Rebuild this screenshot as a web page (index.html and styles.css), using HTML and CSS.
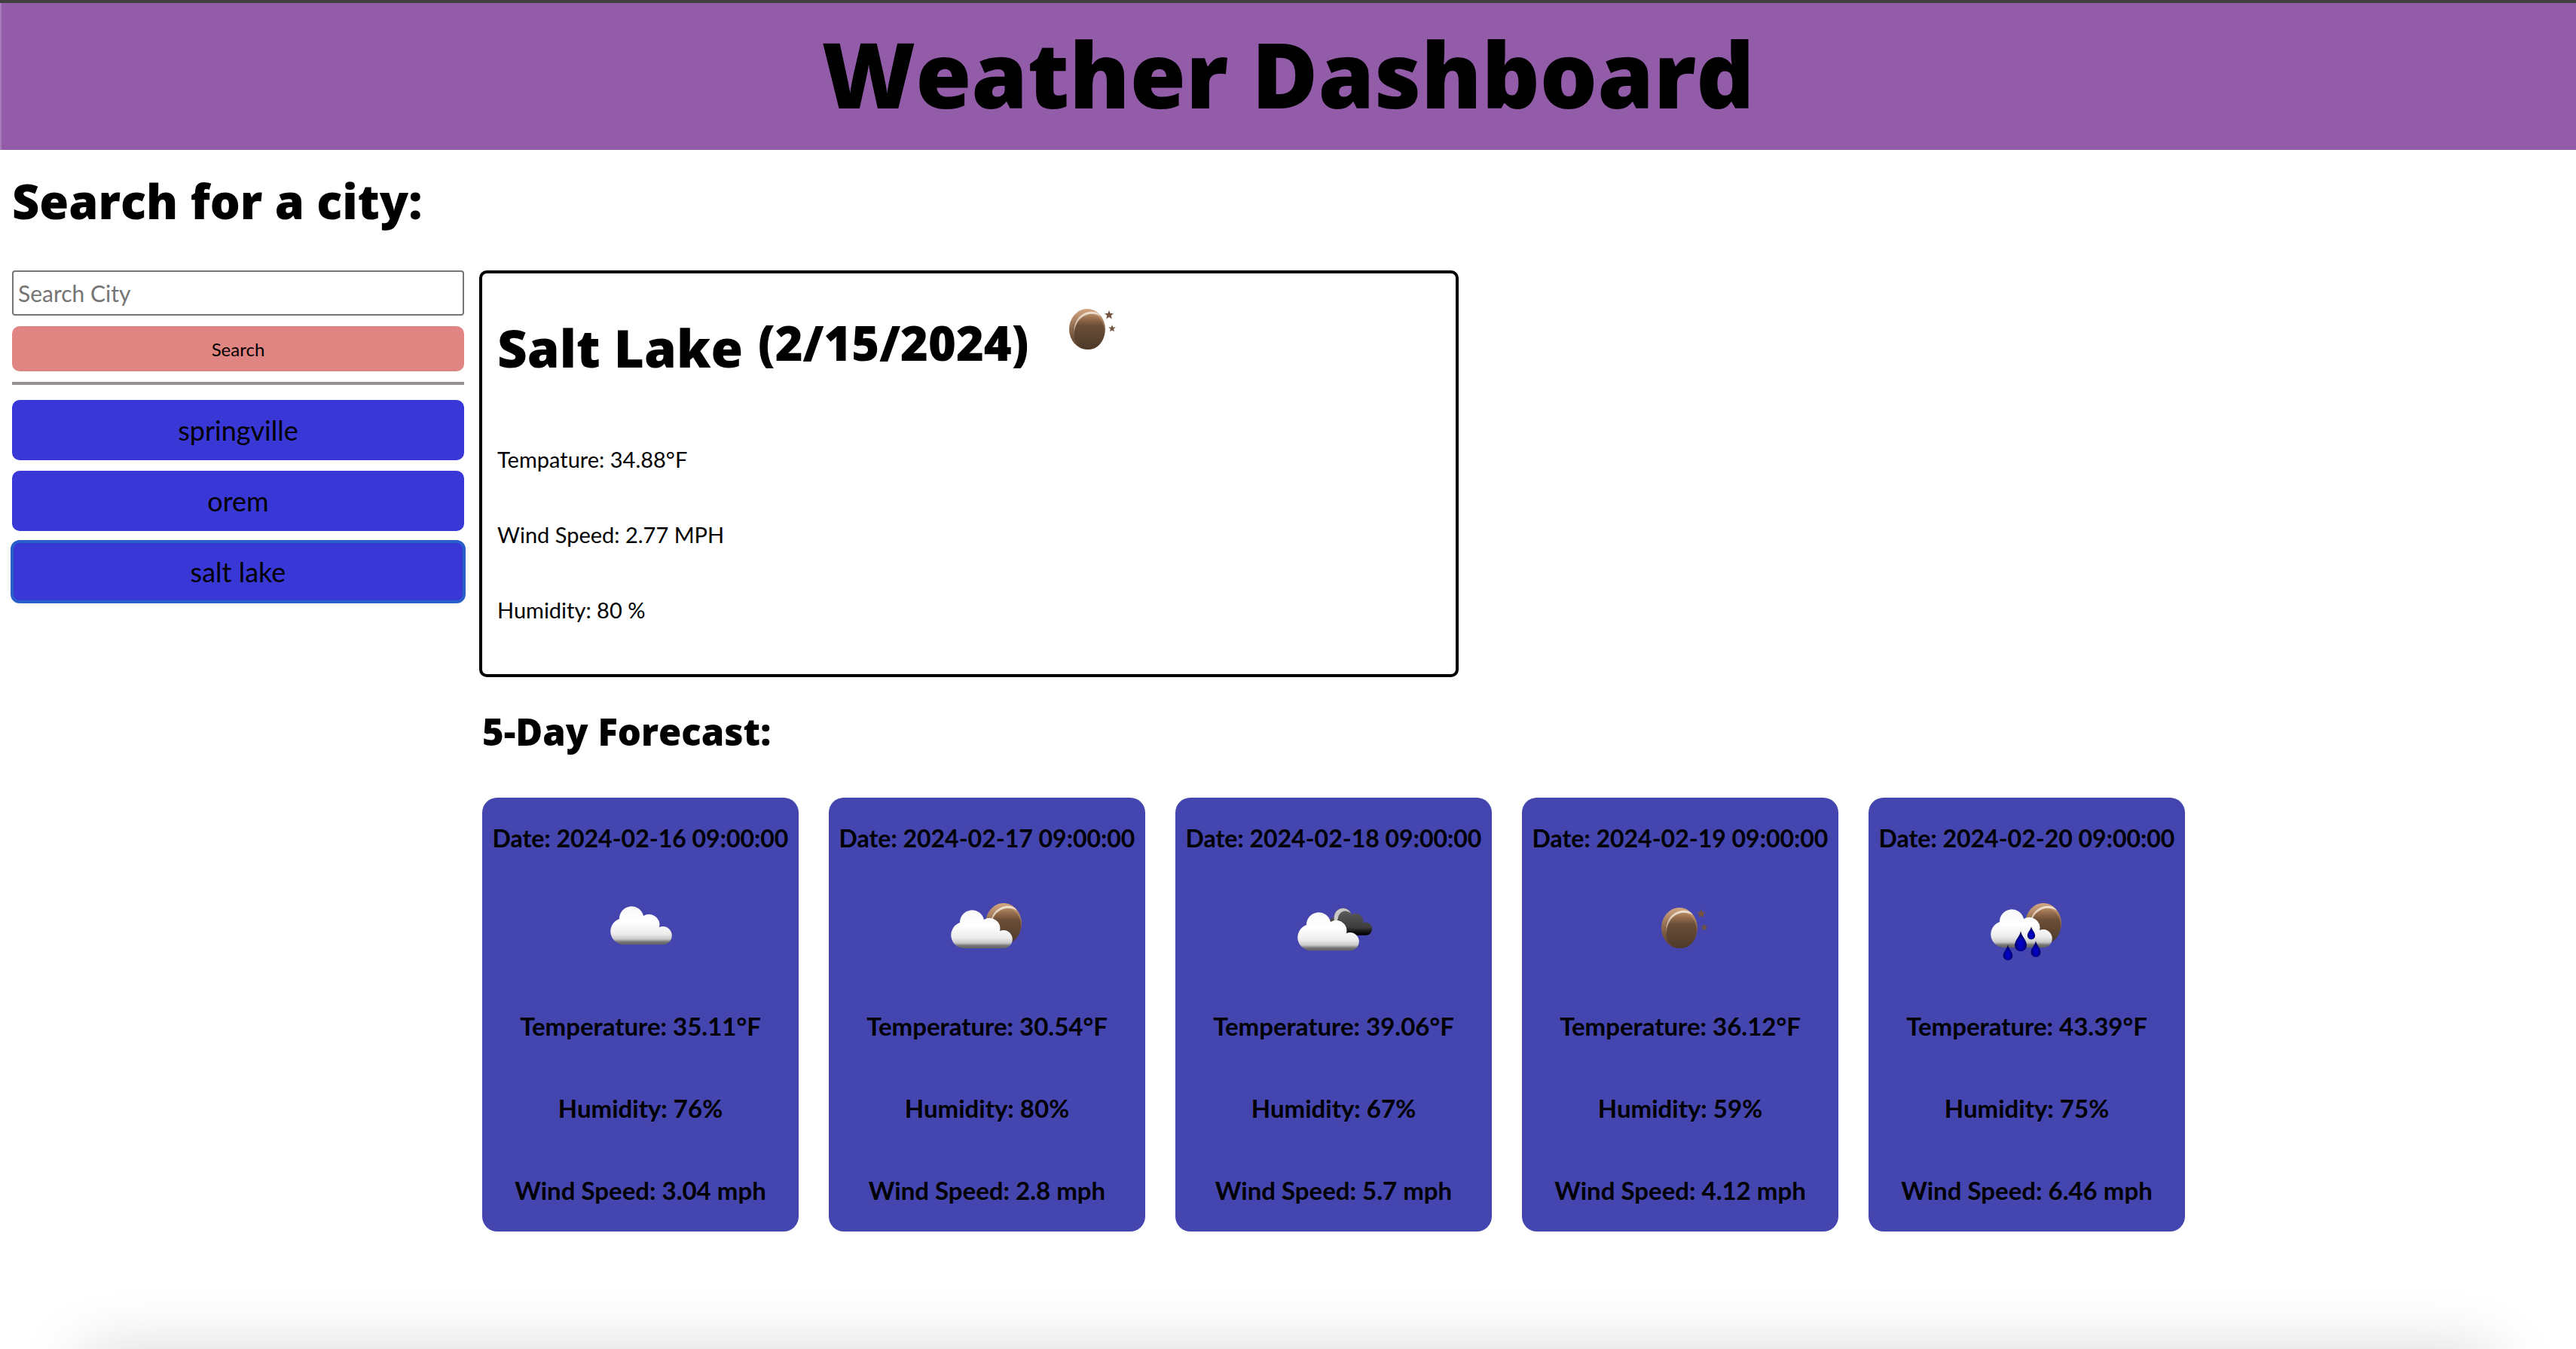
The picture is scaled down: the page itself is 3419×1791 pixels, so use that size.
FILE: index.html
```
<!DOCTYPE html>
<html lang="en">
<head>
  <meta charset="utf-8">
  <meta name="viewport" content="width=device-width, initial-scale=1">
  <title>Weather Dashboard</title>
  <link rel="stylesheet" href="styles.css">
</head>
<body>
  <svg class="sprite" aria-hidden="true">
    <defs>
      <linearGradient id="cloud-fill" x1="0" y1="0" x2="0" y2="1">
        <stop offset="0" stop-color="#f8f8f8"/>
        <stop offset="0.4" stop-color="#ffffff"/>
        <stop offset="0.72" stop-color="#ececec"/>
        <stop offset="0.86" stop-color="#c8c8c8"/>
        <stop offset="0.93" stop-color="#777777"/>
        <stop offset="1" stop-color="#606060"/>
      </linearGradient>
      <linearGradient id="dark-fill" x1="0" y1="0" x2="0" y2="1">
        <stop offset="0" stop-color="#6a6a6a"/>
        <stop offset="0.3" stop-color="#505050"/>
        <stop offset="0.7" stop-color="#3e3e3e"/>
        <stop offset="0.9" stop-color="#0c0c0c"/>
        <stop offset="1" stop-color="#000000"/>
      </linearGradient>
      <linearGradient id="moon-rim" x1="0" y1="0" x2="0" y2="1">
        <stop offset="0" stop-color="#d3a680"/>
        <stop offset="0.5" stop-color="#8c664a"/>
        <stop offset="1" stop-color="#503c2a"/>
      </linearGradient>
      <linearGradient id="moon-face" x1="0" y1="0" x2="0" y2="1">
        <stop offset="0" stop-color="#b98e6a"/>
        <stop offset="0.16" stop-color="#936a4b"/>
        <stop offset="0.34" stop-color="#6b4e37"/>
        <stop offset="1" stop-color="#4c392a"/>
      </linearGradient>
      <linearGradient id="moon-shine" x1="0" y1="0" x2="0" y2="1">
        <stop offset="0" stop-color="#f0e2d4"/>
        <stop offset="0.5" stop-color="#e0c8b0" stop-opacity="0.8"/>
        <stop offset="1" stop-color="#a98263" stop-opacity="0"/>
      </linearGradient>
      <radialGradient id="drop-fill" cx="0.5" cy="0.65" r="0.5">
        <stop offset="0" stop-color="#0000d8"/>
        <stop offset="0.55" stop-color="#0000a8"/>
        <stop offset="1" stop-color="#000058"/>
      </radialGradient>
      <path id="cloud" d="M27 72A17.5 17.5 0 0 1 22 38A16.2 16.2 0 0 1 54 34A14 14 0 0 1 75 49A12 12 0 1 1 80 72Z"/>
      <path id="drop" d="M0 0C1 7 8 12 8 19A8 8 0 0 1 -8 19C-8 12 -1 7 0 0Z" fill="url(#drop-fill)"/>
      <path id="star" d="M0 -6L1.6 -2L6 -1.8L2.6 1L3.8 5.4L0 3L-3.8 5.4L-2.6 1L-6 -1.8L-1.6 -2Z" fill="#74533f"/>
      <g id="moon">
        <ellipse cx="0" cy="0" rx="24" ry="27" fill="url(#moon-rim)"/>
        <ellipse cx="2" cy="3" rx="21" ry="24" fill="url(#moon-face)"/>
        <path d="M-17 16C-22 -4 -13 -21 3 -23C12 -24 16 -20 18 -17C12 -21 4 -21 -1 -19C-14 -14 -19 0 -17 16Z" fill="url(#moon-shine)"/>
      </g>
    </defs>
    <symbol id="icon-clear-night" viewBox="0 0 100 100">
      <use href="#moon" x="49" y="50"/>
      <use href="#star" x="78" y="31"/>
      <use href="#star" transform="translate(82 49) scale(.8)"/>
    </symbol>
    <symbol id="icon-clouds" viewBox="0 0 100 100">
      <use href="#cloud" fill="url(#cloud-fill)"/>
    </symbol>
    <symbol id="icon-moon-cloud" viewBox="0 0 100 100">
      <use href="#moon" x="72" y="44"/>
      <use href="#cloud" x="-8" y="5" fill="url(#cloud-fill)"/>
    </symbol>
    <symbol id="icon-overcast" viewBox="0 0 104 100">
      <g transform="translate(35 8) scale(.72)">
        <use href="#cloud" fill="url(#dark-fill)"/>
        <path d="M22 44C20 28 32 20 42 23C48 24 51 28 53 32C46 24 34 26 30 36L26 52Z" fill="#c8c8c8"/>
      </g>
      <use href="#cloud" x="-8" y="8" fill="url(#cloud-fill)"/>
    </symbol>
    <symbol id="icon-rain-night" viewBox="0 0 100 100">
      <use href="#moon" x="72" y="44"/>
      <use href="#cloud" x="-8" y="4" fill="url(#cloud-fill)"/>
      <use href="#drop" x="42" y="54"/>
      <use href="#drop" transform="translate(56 48) scale(.64)"/>
      <use href="#drop" transform="translate(25 72) scale(.78)"/>
      <use href="#drop" transform="translate(62 67) scale(.8)"/>
    </symbol>
  </svg>

  <header class="banner">
    <h1 class="banner-title">Weather Dashboard</h1>
  </header>

  <main class="page">
    <h2 class="search-title"><label for="city">Search for a city:</label></h2>
    <div class="columns">
      <aside class="sidebar">
        <form class="search-form" onsubmit="return false">
          <input class="search-input" id="city" type="text" placeholder="Search City">
          <button class="search-button" type="submit">Search</button>
        </form>
        <div class="history">
          <button class="history-button" type="button">springville</button>
          <button class="history-button" type="button">orem</button>
          <button class="history-button history-button-active" type="button">salt lake</button>
        </div>
      </aside>

      <div class="results">
        <section class="current">
          <div class="current-heading">
            <h2 class="current-city">Salt Lake</h2>
            <h3 class="current-date">(2/15/2024)</h3>
            <svg class="current-icon" role="img" aria-label="Clear night"><use href="#icon-clear-night"/></svg>
          </div>
          <div class="current-stats">
            <p class="current-stat">Tempature: 34.88°F</p>
            <p class="current-stat">Wind Speed: 2.77 MPH</p>
            <p class="current-stat">Humidity: 80 %</p>
          </div>
        </section>

        <section class="forecast">
          <h3 class="forecast-title">5-Day Forecast:</h3>
          <div class="cards">
            <article class="card">
              <h4 class="card-date">Date: 2024-02-16 09:00:00</h4>
              <svg class="card-icon" role="img" aria-label="Cloudy"><use href="#icon-clouds"/></svg>
              <div class="card-stats">
                <p class="card-stat">Temperature: 35.11°F</p>
                <p class="card-stat">Humidity: 76%</p>
                <p class="card-stat">Wind Speed: 3.04 mph</p>
              </div>
            </article>
            <article class="card">
              <h4 class="card-date">Date: 2024-02-17 09:00:00</h4>
              <svg class="card-icon" role="img" aria-label="Few clouds"><use href="#icon-moon-cloud"/></svg>
              <div class="card-stats">
                <p class="card-stat">Temperature: 30.54°F</p>
                <p class="card-stat">Humidity: 80%</p>
                <p class="card-stat">Wind Speed: 2.8 mph</p>
              </div>
            </article>
            <article class="card">
              <h4 class="card-date">Date: 2024-02-18 09:00:00</h4>
              <svg class="card-icon card-icon-wide" role="img" aria-label="Overcast"><use href="#icon-overcast"/></svg>
              <div class="card-stats">
                <p class="card-stat">Temperature: 39.06°F</p>
                <p class="card-stat">Humidity: 67%</p>
                <p class="card-stat">Wind Speed: 5.7 mph</p>
              </div>
            </article>
            <article class="card">
              <h4 class="card-date">Date: 2024-02-19 09:00:00</h4>
              <svg class="card-icon" role="img" aria-label="Clear night"><use href="#icon-clear-night"/></svg>
              <div class="card-stats">
                <p class="card-stat">Temperature: 36.12°F</p>
                <p class="card-stat">Humidity: 59%</p>
                <p class="card-stat">Wind Speed: 4.12 mph</p>
              </div>
            </article>
            <article class="card">
              <h4 class="card-date">Date: 2024-02-20 09:00:00</h4>
              <svg class="card-icon" role="img" aria-label="Rain"><use href="#icon-rain-night"/></svg>
              <div class="card-stats">
                <p class="card-stat">Temperature: 43.39°F</p>
                <p class="card-stat">Humidity: 75%</p>
                <p class="card-stat">Wind Speed: 6.46 mph</p>
              </div>
            </article>
          </div>
        </section>
      </div>
    </div>
  </main>
</body>
</html>
```
FILE: styles.css
```
* {
  box-sizing: border-box;
  margin: 0;
}

body {
  min-height: 100vh;
  overflow-x: hidden;
  background: #ffffff;
  color: #000000;
  font-family: "Gill Sans", Lato, sans-serif;
}

/* soft shade rising from the lower edge of the window */
body::after {
  content: "";
  position: fixed;
  right: 120px;
  bottom: -70px;
  left: 120px;
  height: 50px;
  box-shadow: 0 0 90px 10px rgba(0, 0, 0, 0.2);
  pointer-events: none;
}

h1,
h2,
h3 {
  font-family: "Gill Sans", "Open Sans", sans-serif;
  font-weight: 800;
}

.sprite {
  position: absolute;
  width: 0;
  height: 0;
}

.banner {
  padding: 14px 0 21px;
  border-top: 4px solid #404040;
  background: #935ca9;
  box-shadow: inset 2px 0 #a57bbb;
  text-align: center;
}

.banner-title {
  font-size: 120px;
  line-height: 160px;
}

.page {
  padding: 28px 16px;
}

.search-title {
  margin-bottom: 52px;
  font-size: 63px;
  line-height: 80px;
}

.columns {
  display: flex;
  align-items: flex-start;
  gap: 20px;
}

.sidebar {
  flex: 0 0 600px;
}

.search-form {
  display: flex;
  flex-direction: column;
  gap: 14px;
  padding-bottom: 14px;
  border-bottom: 4px solid #969090;
}

.search-input {
  height: 60px;
  padding: 2px 6px;
  border: 2px solid #767676;
  border-radius: 4px;
  background: #ffffff;
  font-family: inherit;
  font-size: 30px;
}

.search-input::placeholder {
  color: #757575;
}

.search-button {
  height: 60px;
  border: 0;
  border-radius: 10px;
  background: #e08582;
  color: #000000;
  font-family: inherit;
  font-size: 24px;
}

.history {
  display: flex;
  flex-direction: column;
  gap: 14px;
  margin-top: 20px;
}

.history-button {
  height: 80px;
  border: 0;
  border-radius: 10px;
  background: #3938d6;
  color: #000000;
  font-family: inherit;
  font-size: 36px;
}

.history-button-active {
  outline: 4px solid #285fc8;
  outline-offset: -2px;
}

.results {
  flex: 1;
  min-width: 0;
}

.current {
  max-width: 1300px;
  padding: 24px 20px 65px;
  border: 4px solid #000000;
  border-radius: 10px;
}

.current-heading {
  display: flex;
  align-items: flex-start;
}

.current-city {
  margin-top: 24px;
  margin-right: 20px;
  font-size: 69px;
  line-height: 100px;
}

.current-date {
  margin-top: 24px;
  margin-right: 29px;
  font-size: 63px;
  line-height: 88px;
}

.current-icon,
.card-icon {
  width: 100px;
  height: 100px;
}

.card-icon-wide {
  width: 104px;
  margin-right: -4px;
}

.current-stats {
  display: flex;
  flex-direction: column;
  gap: 60px;
  margin-top: 79px;
}

.current-stat {
  font-size: 29px;
  line-height: 40px;
}

.forecast {
  padding: 42px 4px 0;
}

.forecast-title {
  margin-bottom: 58px;
  font-size: 49px;
  line-height: 60px;
}

.cards {
  display: flex;
  flex-wrap: wrap;
  gap: 40px;
}

.card {
  display: flex;
  flex-direction: column;
  align-items: center;
  width: 420px;
  padding: 34px 0 35px;
  border-radius: 20px;
  background: #4445ae;
  text-align: center;
}

.card-date {
  margin-bottom: 49px;
  font-size: 32px;
  font-weight: 700;
  line-height: 40px;
}

.card-stats {
  display: flex;
  flex-direction: column;
  gap: 69px;
  margin-top: 60px;
}

.card-stat {
  font-size: 33px;
  font-weight: 700;
  line-height: 40px;
}
```
